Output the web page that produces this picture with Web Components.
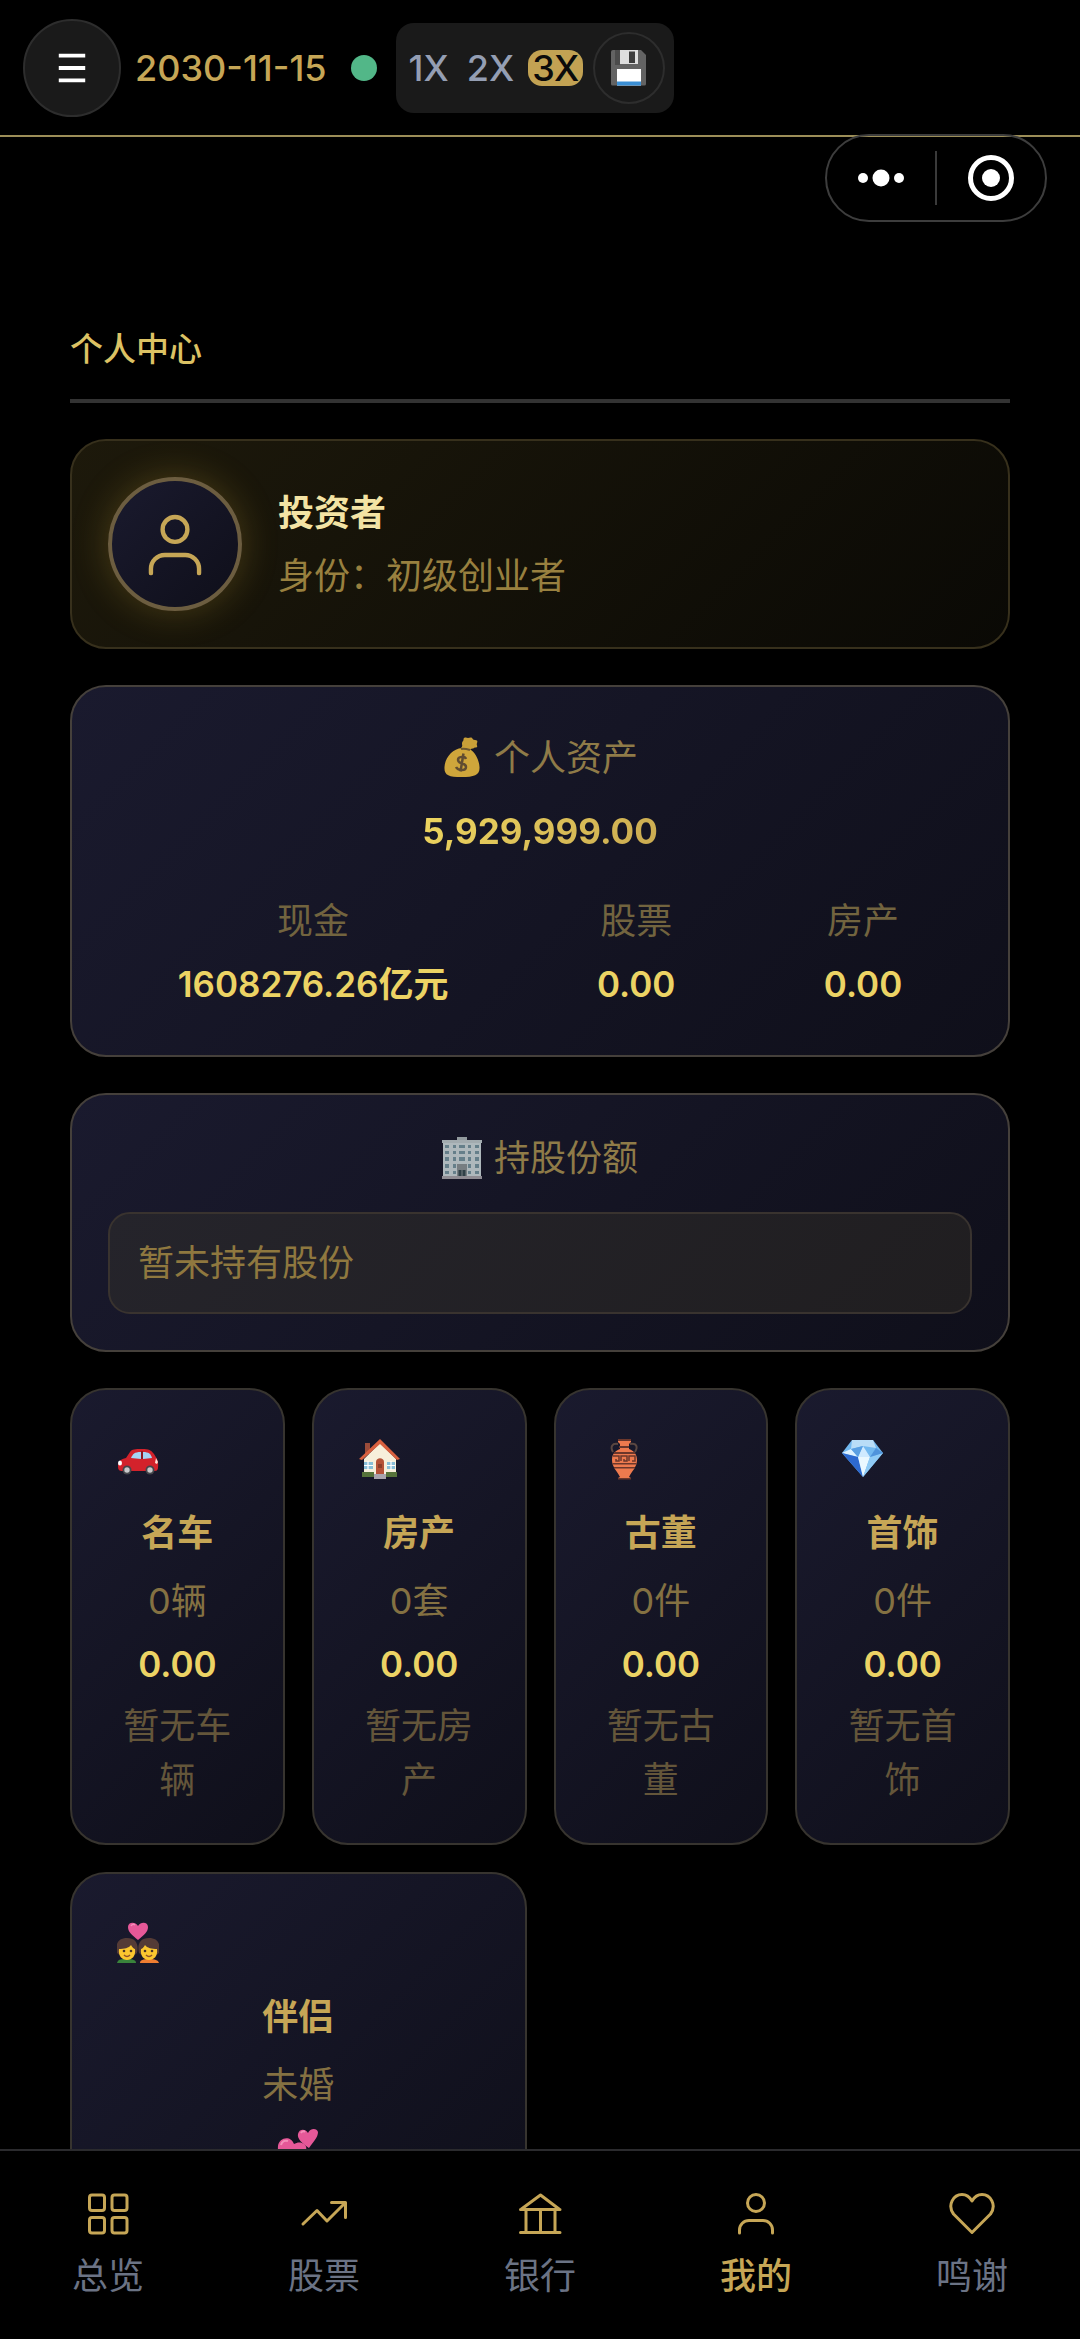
<!DOCTYPE html>
<html lang="zh-CN">
<head>
<meta charset="utf-8">
<meta name="viewport" content="width=device-width, initial-scale=1">
<title>个人中心</title>
<style>
  html, body { margin: 0; height: 100%; background: #000; }
  body {
    font: 400 36px/54px Inter, "Noto Sans CJK SC", sans-serif;
    color: #c6a656;
  }
</style>
</head>
<body>
<game-app></game-app>

<script>
const ICONS = {
  menu: ['0 0 36 36', '<path d="M4 5h28M4 18h28M4 31h28" stroke="#fff" stroke-width="4"/>'],
  user: ['0 0 48 48', '<circle cx="24" cy="14" r="8.500"/><path d="M7.500 44V41a9.500 9.500 0 0 1 9.500-9.500h14a9.500 9.500 0 0 1 9.500 9.500v3"/>'],
  grid: ['0 0 48 48', '<rect x="5.500" y="6" width="15" height="15.500" rx="2.500"/><rect x="28" y="6" width="15" height="15.500" rx="2.500"/><rect x="5.500" y="28.500" width="15" height="15.500" rx="2.500"/><rect x="28" y="28.500" width="15" height="15.500" rx="2.500"/>'],
  trend: ['0 0 48 48', '<path d="M3 35 17 21.500 27 32 45 14M31.500 13.500h14v15"/>'],
  bank: ['0 0 48 48', '<path d="M4.500 20.500h39.500M4.500 43.500h39.500M5.500 20 24.500 6 43 20M10 21v22M24.500 21v22M39 21v22"/>'],
  heart: ['0 0 48 48', '<path d="M24 43.500 5.500 25C-1 16 5.500 5.500 14 5.500c4.500 0 8 3 10 6.500 2-3.500 5.500-6.500 10-6.500 8.500 0 15 10.500 8.500 19.500z"/>'],
  save: ['0 0 36 36', '<path d="M2 0h28l5 5v29a1.500 1.500 0 0 1-1.500 1.500h-32A1.500 1.500 0 0 1 0 34V2a2 2 0 0 1 2-2z" fill="#636363"/><path d="M4 0h5v15H4z" fill="#4b4b4b"/><path d="M9 0h18v14H9z" fill="#dedede"/><path d="M18 1.500h6V13h-6z" fill="#3c3c3c"/><path d="M6 19h24v16.500H6z" fill="#fff"/><path d="M6 31.500h24v4H6z" fill="#3b8fd4"/>'],
  money: ['0 0 36 42', '<path d="M20 1c2-1 3 0 4 0s3-1 4 0 1 2 3 2 3 1 2 3 1 3 0 4-2 0-3 1-3 0-4 2l-9-2c2-2 1-3 1-4s0-2 1-3 0-2 1-3z" fill="#c99f38"/><path d="M18 11c4-1 7 0 9 2 4 3 8 9 8.500 17 .5 8-5 10-18 10S0 38 .500 30C1 21 8 12 18 11z" fill="#cfa63b"/><path d="M17 12c3-1 6 0 9 1" stroke="#6d5730" stroke-width="2" fill="none"/><path d="M22 22c-1-3-8-3-8 1 0 5 8 2 8 7 0 4-8 4-10 0M19.500 16.500l-3 18" fill="none" stroke="#604c31" stroke-width="2.500"/>'],
  building: ['0 0 40 42', '<path d="M15 0h10v4H15z" fill="#929a9e"/><path d="M0 3h40v3H0z" fill="#a2abaf"/><path d="M1 6h38v34H1z" fill="#aeb8bc"/><path d="M0 39h40v3H0z" fill="#8e8b92"/><g fill="#657f8a"><path d="M3 8h4v3H3zm8 0h3v3h-3zm6 0h6v3h-6zm9 0h3v3h-3zm7 0h4v3h-4zM3 14h4v3H3zm8 0h3v3h-3zm6 0h6v3h-6zm9 0h3v3h-3zm7 0h4v3h-4zM3 20h4v4H3zm8 0h3v4h-3zm6 0h6v4h-6zm9 0h3v4h-3zm7 0h4v4h-4zM3 27h4v4H3zm8 0h3v4h-3zm15 0h3v4h-3zm7 0h4v4h-4zM3 34h4v3H3zm8 0h3v3h-3zm15 0h3v3h-3zm7 0h4v3h-4z"/></g><path d="M15 27h10v12H15z" fill="#777e82"/><path d="M16.500 33h3v6h-3zm4 0h3v6h-3z" fill="#2f4047"/>'],
  car: ['0 0 42 42', '<path d="M1 28c0-5 3-7 8-8l4-6c2-3 5-3 12-3s9 1 12 5l3 5c1 2 1.500 5 1 9-.500 3-2 3-5 3H6c-4 0-5-1-5-5z" fill="#d3222b"/><path d="M14 20c2-4 3-6 10-6v7zM26 14c6 0 8 2 9 6l-9 1z" fill="#a5d5f5"/><path d="M24 13h2v8h-2z" fill="#8c1a22"/><circle cx="10" cy="32" r="4.500" fill="#45464b"/><circle cx="10" cy="32" r="2.700" fill="#c9c9cb"/><circle cx="33" cy="32" r="4.500" fill="#45464b"/><circle cx="33" cy="32" r="2.700" fill="#c9c9cb"/><ellipse cx="3" cy="25" rx="2" ry="2.500" fill="#fff"/><path d="M39 20l2 4-1 2-2-1z" fill="#ffe2d8"/>'],
  house: ['0 0 42 42', '<path d="M6 5h5v11H6z" fill="#9b4c3a"/><path d="M5 21 21 5l16 16v16H5z" fill="#f7efdb"/><path d="M0 21 21 1l20 20-3 1L21 6 3 22z" fill="#d9603f"/><path d="M5 24h9v7H5zm23 0h8v7h-8z" fill="#89bfd8"/><path d="M9 23v9M5 27.500h9M32 23v9M28 27.500h8" stroke="#fff" stroke-width="1.200"/><path d="M17 37V24c0-5 8-5 8 0v13z" fill="#b55238"/><path d="M19 26h4v4h-4z" fill="#8b3e2b"/><path d="M3 34h12v5H3zm24 0h11v5H27z" fill="#56733a"/><path d="M15 36h12v5H15z" fill="#a9a4ad"/>'],
  vase: ['0 0 42 42', '<path d="M17 6c-6-1-8 3-5 8M29 6c7-1 8 3 5 8" stroke="#5a4741" stroke-width="2" fill="none"/><path d="M17 2h13v2l-2 2v5c5 2 8 5 8 11 0 7-5 11-8 17l2 1v1H17v-1l2-1c-3-6-8-10-8-17 0-6 3-9 8-11V6l-2-2z" fill="#ee7a4e"/><path d="M17 1h13v2H17zM18 8h10v2H18zM13 14h21v2H13zM11.500 25h24v1.500h-24zM13 29h21v1.500H13zM17 40h13v1.500H17z" fill="#6c372b"/><path d="M12 18h6v5h-3v-2M20 23v-5h6v5h-3v-2M28 23v-5h6v5h-3" fill="none" stroke="#6c372b" stroke-width="1.500"/>'],
  gem: ['0 0 42 42', '<path d="M10 2h21l10 13-20 24L0 15z" fill="#72b8ef"/><path d="M10 2h21l3 8-13-2-12 3z" fill="#b9ddf7"/><path d="M0 15 9 11l7 8z" fill="#dcf1ff"/><path d="M0 15l16 4 5 20z" fill="#2d69cf"/><path d="M16 19h12l-7 20z" fill="#eaf8ff"/><path d="M28 19l13-4-20 24z" fill="#90cbf5"/><path d="M21 8l7 11H16z" fill="#cfeaff"/><path d="M9 11l12-3-5 11z" fill="#5a9fe2"/><path d="M34 10l7 5-13 4z" fill="#4f93db"/>'],
  couple: ['0 0 42 42', '<path d="M21 18C15 13 11 10 11 5c0-5 7-6 10-1 3-5 10-4 10 1 0 5-4 8-10 13z" fill="#e65898"/><path d="M14 4c1-2 3-2 4-1" stroke="#f58fba" stroke-width="1.500" fill="none"/><path d="M0 41c1-4 4-4 10-4s9 1 9 4z" fill="#39833b"/><path d="M23 41c0-3 3-4 9-4s9 1 10 4z" fill="#ef7d31"/><path d="M0 31c-2-9 1-15 10-15s12 6 10 15l-4 3H4zM22 31c-2-9 1-15 10-15s12 6 10 15l-4 3H26z" fill="#543b36"/><path d="M2 27c5 0 10-1 12-4 1 2 3 4 4 4 1 7-3 11-8 11s-9-4-8-11zM24 27c1 0 3-2 4-4 2 3 7 4 12 4 1 7-3 11-8 11s-9-4-8-11z" fill="#fbc72f"/><circle cx="7" cy="29" r="1.300" fill="#4b3527"/><circle cx="14" cy="29" r="1.300" fill="#4b3527"/><circle cx="28" cy="29" r="1.300" fill="#4b3527"/><circle cx="35" cy="29" r="1.300" fill="#4b3527"/><path d="M7 33c2 2 4 2 6 0M29 33c2 2 4 2 6 0" stroke="#90522b" stroke-width="1.500" fill="none"/>'],
  hearts: ['0 0 42 42', '<path d="M32 20C25 15 20 11 21 6c1-5 7-6 10-1 2-5 9-5 10-1 0 5-4 9-9 16z" fill="#e65898"/><path d="M14 40C7 35 0 28 1 18c1-9 13-11 16-2 6-4 14 0 12 6-2 8-8 13-15 18z" fill="#e65898"/><path d="M4 17c1-4 4-5 7-4M24 5c1-2 3-2 4-1" stroke="#f58fba" stroke-width="2" fill="none"/>']
};
const LINE_ICONS = new Set(['user', 'grid', 'trend', 'bank', 'heart']);

/* <app-icon name="…"> draws one entry of ICONS and follows its name attribute. */
customElements.define('app-icon', class extends HTMLElement {
  static observedAttributes = ['name'];
  constructor() {
    super();
    this.attachShadow({ mode: 'open' }).innerHTML = `
      <style>
        :host { display: block; flex: none; width: 48px; height: 48px; }
        svg { display: block; width: 100%; height: 100%; fill: none; }
        .line { stroke: #c6a656; stroke-width: 3; stroke-linecap: round; stroke-linejoin: round; }
      </style>
      <svg aria-hidden="true"></svg>`;
  }
  attributeChangedCallback(attribute, before, name) {
    if (!ICONS[name]) return;
    const svg = this.shadowRoot.querySelector('svg');
    svg.setAttribute('viewBox', ICONS[name][0]);
    svg.innerHTML = ICONS[name][1];
    svg.classList.toggle('line', LINE_ICONS.has(name));
  }
});

/* Registers an element whose shadow root is cloned from a template. */
function define(name, html, setup) {
  const template = document.createElement('template');
  template.innerHTML = html;
  customElements.define(name, class extends HTMLElement {
    constructor() {
      super();
      this.attachShadow({ mode: 'open' }).append(template.content.cloneNode(true));
    }
    connectedCallback() { if (setup) setup(this, this.shadowRoot); }
  });
}

const passIcon = (host, root) =>
  root.querySelector('app-icon').setAttribute('name', host.getAttribute('icon'));

define('speed-switch', `
  <style>
    :host { display: flex; align-items: center; gap: 10px; padding: 9px; background: #1a1a1a; border-radius: 18px; }
    button { font: inherit; border: 0; margin: 0; background: none; color: #949eb3; cursor: pointer; }
    .speed { font-weight: 500; line-height: 36px; padding: 0 4px; border-radius: 14px; }
    .speed[aria-pressed="true"] { background: #c2a253; color: #0b0b0b; }
    .save { box-sizing: border-box; width: 72px; height: 72px; padding: 0; border: 2px solid #2d2d2d; border-radius: 50%; display: grid; place-items: center; }
    .save app-icon { width: 36px; height: 36px; }
  </style>
  <button class="speed" aria-pressed="false">1X</button>
  <button class="speed" aria-pressed="false">2X</button>
  <button class="speed" aria-pressed="true">3X</button>
  <button class="save" aria-label="保存"><app-icon name="save"></app-icon></button>`);

define('app-header', `
  <style>
    :host { display: flex; align-items: center; flex: none; height: 135px; padding: 0 23px; border-bottom: 2px solid #9c8e58; background: #000; }
    .menu { box-sizing: border-box; width: 98px; height: 98px; padding: 0; border: 2px solid #2d2d2d; border-radius: 50%; background: #1a1a1a; display: grid; place-items: center; cursor: pointer; }
    .menu app-icon { width: 34px; height: 34px; }
    time { font-weight: 500; margin-left: 14px; white-space: nowrap; }
    .dot { width: 26px; height: 26px; border-radius: 50%; background: #52b788; margin: 0 19px 0 24px; }
  </style>
  <button class="menu" aria-label="菜单"><app-icon name="menu"></app-icon></button>
  <time datetime="2030-11-15">2030-11-15</time>
  <span class="dot"></span>
  <speed-switch></speed-switch>`);

define('mini-capsule', `
  <style>
    :host { position: absolute; top: 134px; right: 33px; display: flex; align-items: center; box-sizing: border-box; width: 222px; height: 88px; border: 2px solid #3d3d3d; border-radius: 44px; }
    button { flex: 1; height: 84px; padding: 0; border: 0; background: none; display: grid; place-items: center; cursor: pointer; }
    i { width: 2px; height: 54px; background: #3a3a3a; }
    svg { display: block; fill: #fff; }
  </style>
  <button aria-label="更多"><svg width="48" height="48" viewBox="0 0 48 48"><circle cx="6" cy="24" r="5"/><circle cx="24" cy="24" r="8.500"/><circle cx="42" cy="24" r="5"/></svg></button>
  <i></i>
  <button aria-label="关闭"><svg width="48" height="48" viewBox="0 0 48 48"><circle cx="24" cy="24" r="20.500" fill="none" stroke="#fff" stroke-width="5"/><circle cx="24" cy="24" r="9"/></svg></button>`);

define('section-title', `
  <style>
    :host { display: block; padding-bottom: 23px; margin-bottom: 36px; border-bottom: 4px solid #333; }
    h1 { margin: 0; font-size: 33px; line-height: 54px; font-weight: 500; color: #dcc264; }
  </style>
  <h1><slot></slot></h1>`);

define('profile-card', `
  <style>
    :host { display: flex; align-items: center; gap: 36px; padding: 36px; border: 2px solid #37301c; border-radius: 36px; background: linear-gradient(135deg, #1d190b, #0a0905); margin-bottom: 36px; }
    .avatar { box-sizing: border-box; width: 134px; height: 134px; border: 4px solid #6c5d40; border-radius: 50%; background: linear-gradient(135deg, #1a1a2e, #0f0f1a); box-shadow: 0 0 36px rgba(212, 175, 55, .26); display: grid; place-items: center; }
    .avatar app-icon { width: 70px; height: 70px; }
    h2, p { margin: 0; font-size: 36px; line-height: 54px; }
    h2 { font-weight: 600; color: #f3e3a4; }
    p { margin-top: 9px; color: #98803f; }
  </style>
  <div class="avatar"><app-icon name="user"></app-icon></div>
  <div><h2><slot name="name"></slot></h2><p><slot></slot></p></div>`);

define('stat-item', `
  <style>
    :host { display: block; text-align: center; }
    span, strong { display: block; white-space: nowrap; }
    span { color: #72643f; }
    strong { margin-top: 9px; font-size: 35px; font-weight: 600; color: #ecd364; }
  </style>
  <span><slot name="label"></slot></span><strong><slot></slot></strong>`);

define('panel-card', `
  <style>
    :host { display: block; padding: 36px; border: 2px solid #45403b; border-radius: 36px; background: linear-gradient(135deg, #1a1a2e, #0f0f1a); margin-bottom: 36px; }
    h2 { margin: 0; display: flex; align-items: center; justify-content: center; gap: 12px; font-size: 36px; font-weight: 400; line-height: 54px; color: #8f7b48; }
    h2 app-icon { width: 40px; height: 42px; }
    :host([roomy]) { padding: 44px 36px; }
  </style>
  <h2><app-icon></app-icon><slot name="title"></slot></h2>
  <slot></slot>`, passIcon);

define('asset-summary', `
  <style>
    :host { display: block; }
    .total { width: fit-content; margin: 19px auto 36px; font-size: 35px; line-height: 54px; font-weight: 700; background: linear-gradient(135deg, #f0d860, #c8a850); background-clip: text; -webkit-background-clip: text; color: transparent; }
    .stats { display: flex; justify-content: space-around; gap: 9px; }
  </style>
  <div class="total"><slot name="total"></slot></div>
  <div class="stats"><slot></slot></div>`);

define('empty-note', `
  <style>
    :host { display: block; margin-top: 27px; padding: 22px 28px; border: 2px solid #39332f; border-radius: 22px; background: linear-gradient(135deg, #25242b, #201e20); color: #8f783f; }
  </style><slot></slot>`);

define('asset-tile', `
  <style>
    :host { display: block; padding: 36px; border: 2px solid #37342f; border-radius: 36px; background: linear-gradient(135deg, #1a1a2e, #0f0f1a); text-align: center; }
    .icon { display: flex; align-items: center; height: 66px; padding-left: 9px; }
    .icon app-icon { width: 42px; height: 42px; }
    h3, p { margin: 0; font-size: 36px; line-height: 54px; font-weight: 400; }
    h3 { margin-top: 14px; font-weight: 600; color: #c6a656; }
    .count { margin-top: 14px; color: #847142; }
    .value { margin-top: 9px; font-size: 35px; color: #ecd364; font-weight: 600; }
    .note { margin-top: 8px; color: #64563a; }
  </style>
  <div class="icon"><app-icon></app-icon></div>
  <h3><slot name="name"></slot></h3>
  <p class="count"><slot name="count"></slot></p>
  <p class="value"><slot name="value"></slot></p>
  <p class="note"><slot></slot></p>`, passIcon);

define('tile-grid', `
  <style>
    :host { display: grid; grid-template-columns: repeat(4, minmax(0, 1fr)); gap: 27px; }
    ::slotted(.wide) { grid-column: span 2; }
  </style><slot></slot>`);

define('nav-item', `
  <style>
    :host { flex: 1; display: block; }
    a { display: flex; flex-direction: column; align-items: center; gap: 12px; padding-top: 38px; color: #6b7385; text-decoration: none; }
    :host([active]) a { color: #c6a656; font-weight: 500; }
  </style>
  <a href="#"><app-icon></app-icon><slot></slot></a>`,
  (host, root) => {
    passIcon(host, root);
    if (host.hasAttribute('active')) root.querySelector('a').setAttribute('aria-current', 'page');
  });

define('nav-bar', `
  <style>
    :host { display: flex; flex: none; height: 188px; border-top: 2px solid #2b2b2e; background: #000; }
  </style><slot></slot>`);

define('game-app', `
  <style>
    :host { display: flex; flex-direction: column; height: 100vh; position: relative; }
    main { flex: 1; min-height: 0; overflow: auto; scrollbar-width: none; padding: 185px 70px 0; }
    .heart { width: 42px; height: 42px; margin: 16px auto; }
  </style>
  <app-header></app-header>
  <main>
    <section-title>个人中心</section-title>
    <profile-card><span slot="name">投资者</span>身份：初级创业者</profile-card>
    <panel-card icon="money" roomy>
      <span slot="title">个人资产</span>
      <asset-summary>
        <span slot="total">5,929,999.00</span>
        <stat-item><span slot="label">现金</span>1608276.26亿元</stat-item>
        <stat-item><span slot="label">股票</span>0.00</stat-item>
        <stat-item><span slot="label">房产</span>0.00</stat-item>
      </asset-summary>
    </panel-card>
    <panel-card icon="building">
      <span slot="title">持股份额</span>
      <empty-note>暂未持有股份</empty-note>
    </panel-card>
    <tile-grid>
      <asset-tile icon="car"><span slot="name">名车</span><span slot="count">0辆</span><span slot="value">0.00</span>暂无车辆</asset-tile>
      <asset-tile icon="house"><span slot="name">房产</span><span slot="count">0套</span><span slot="value">0.00</span>暂无房产</asset-tile>
      <asset-tile icon="vase"><span slot="name">古董</span><span slot="count">0件</span><span slot="value">0.00</span>暂无古董</asset-tile>
      <asset-tile icon="gem"><span slot="name">首饰</span><span slot="count">0件</span><span slot="value">0.00</span>暂无首饰</asset-tile>
      <asset-tile icon="couple" class="wide"><span slot="name">伴侣</span><span slot="count">未婚</span><app-icon class="heart" slot="value" name="hearts"></app-icon></asset-tile>
    </tile-grid>
  </main>
  <nav-bar role="navigation">
    <nav-item icon="grid">总览</nav-item>
    <nav-item icon="trend">股票</nav-item>
    <nav-item icon="bank">银行</nav-item>
    <nav-item icon="user" active>我的</nav-item>
    <nav-item icon="heart">鸣谢</nav-item>
  </nav-bar>
  <mini-capsule></mini-capsule>`);
</script>
</body>
</html>
